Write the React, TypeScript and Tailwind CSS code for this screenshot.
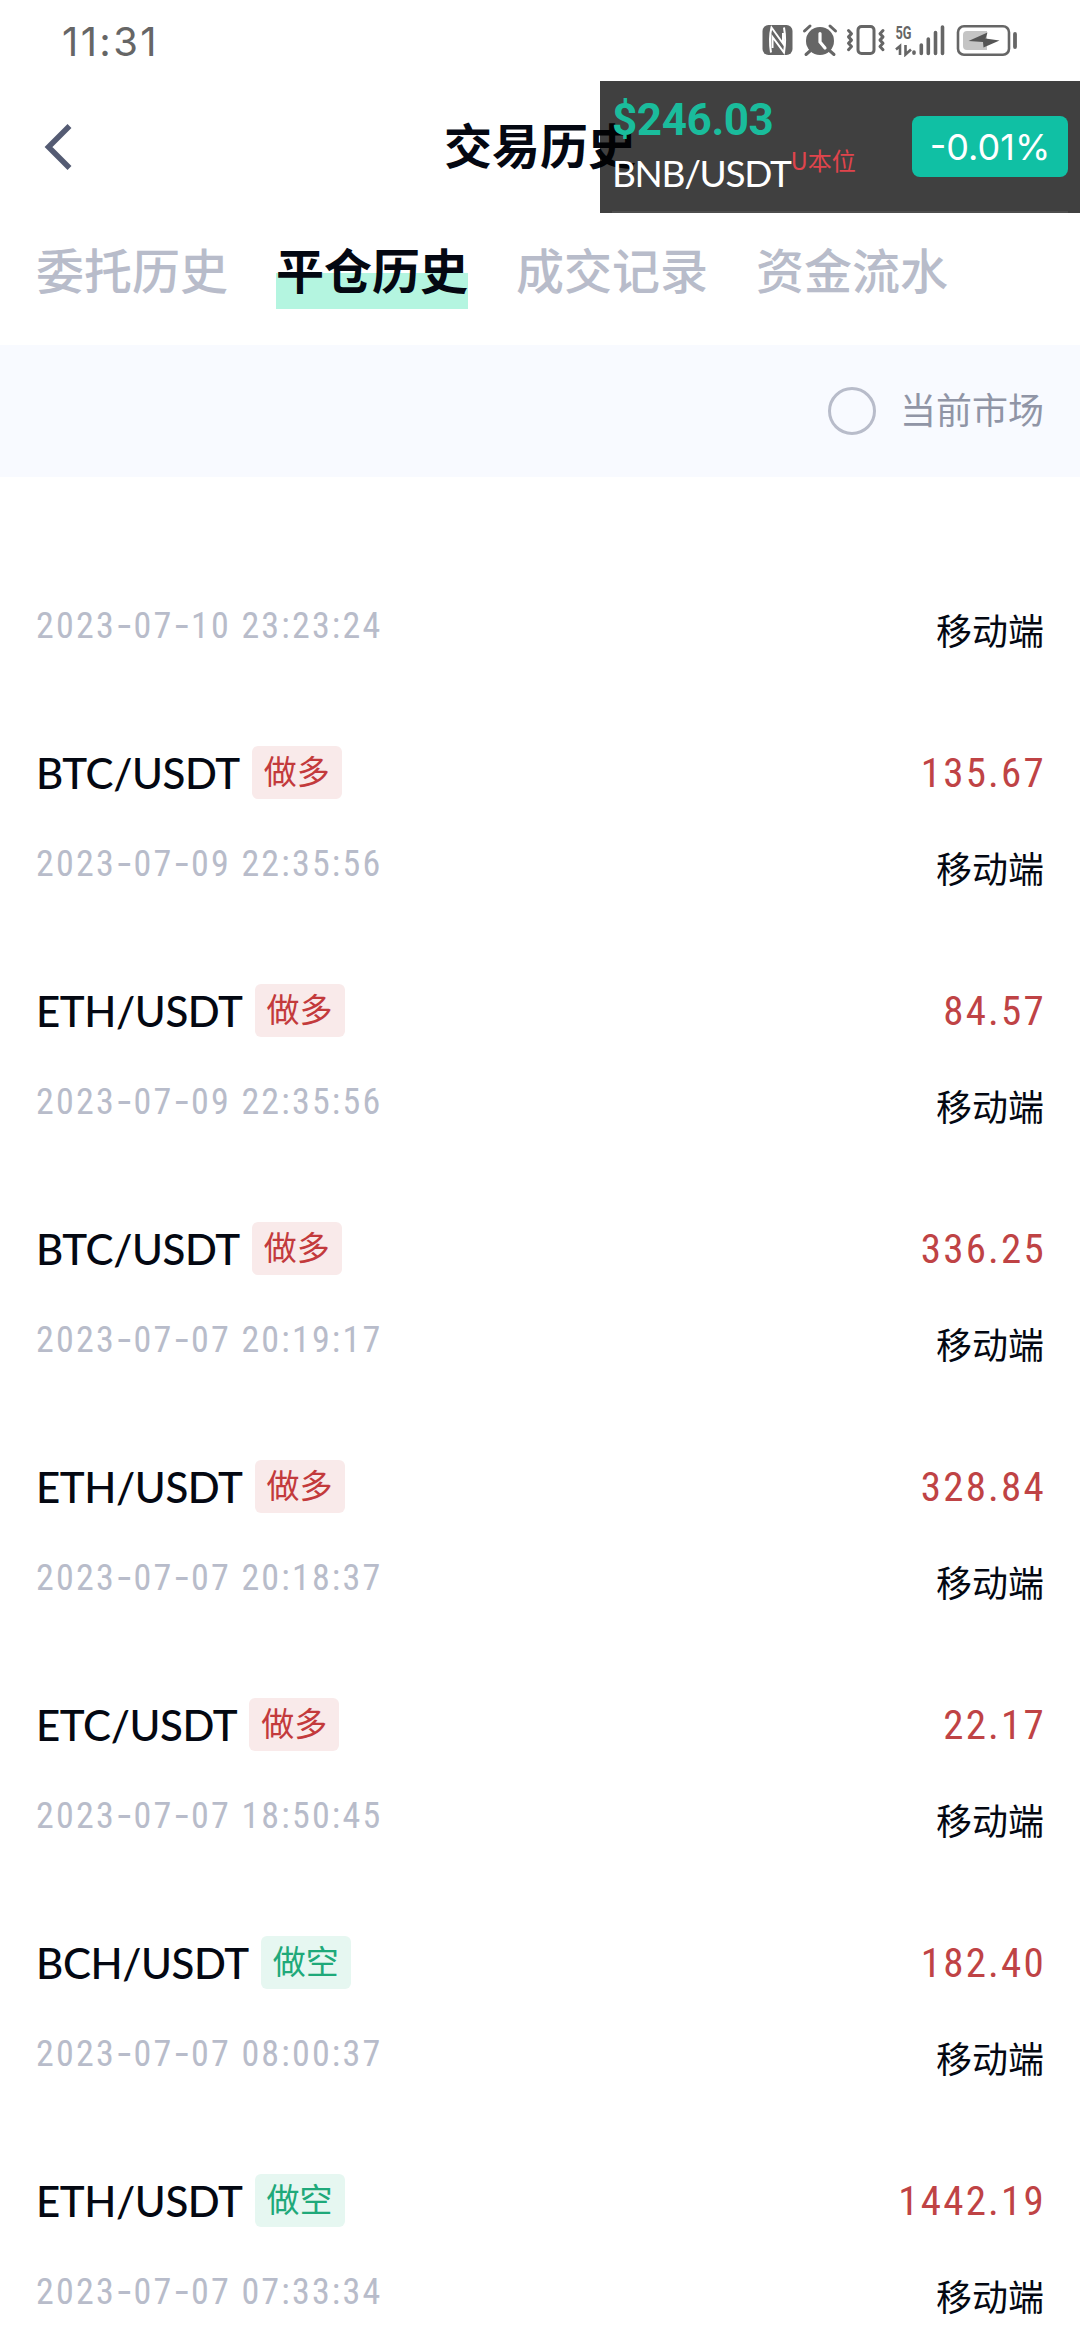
import { clsx } from "clsx"

type Side = "long" | "short"

interface CloseRecord {
  pair?: string
  side?: Side
  profit?: string
  date: string
  time: string
}

const tabs = ["委托历史", "平仓历史", "成交记录", "资金流水"]
const activeTab = "平仓历史"

const records: CloseRecord[] = [
  // scrolled so that only the lower line of this one shows
  { date: "2023-07-10", time: "23:23:24" },
  { pair: "BTC/USDT", side: "long", profit: "135.67", date: "2023-07-09", time: "22:35:56" },
  { pair: "ETH/USDT", side: "long", profit: "84.57", date: "2023-07-09", time: "22:35:56" },
  { pair: "BTC/USDT", side: "long", profit: "336.25", date: "2023-07-07", time: "20:19:17" },
  { pair: "ETH/USDT", side: "long", profit: "328.84", date: "2023-07-07", time: "20:18:37" },
  { pair: "ETC/USDT", side: "long", profit: "22.17", date: "2023-07-07", time: "18:50:45" },
  { pair: "BCH/USDT", side: "short", profit: "182.40", date: "2023-07-07", time: "08:00:37" },
  { pair: "ETH/USDT", side: "short", profit: "1442.19", date: "2023-07-07", time: "07:33:34" },
]

function StatusIcons() {
  return (
    <svg width="258" height="34" viewBox="0 0 258 34" fill="none" className="text-[#666666]">
      {/* nfc */}
      <rect x="2.5" y="2" width="30" height="30" rx="6" fill="currentColor" />
      <path d="M11 29.5C9.6 21 9.6 12 11.5 4.5L23 20.5V10" stroke="white" strokeWidth="2" />
      <path d="M24 4.5C25.5 13 25.5 21 24 29.5L12.5 14V25" stroke="white" strokeWidth="2" />
      {/* alarm */}
      <circle cx="60" cy="18" r="14" fill="currentColor" />
      <path d="M44.5 8L50 3M75.5 8L70 3M50 28l-4 3.5M70 28l4 3.5" stroke="currentColor" strokeWidth="3" strokeLinecap="round" />
      <path d="M60 10.5V19l5 6" stroke="white" strokeWidth="3.2" strokeLinecap="round" />
      {/* vibrate */}
      <rect x="98" y="3.5" width="16" height="27" rx="3.5" stroke="currentColor" strokeWidth="3" />
      <path d="M88.5 7.5l3 3.2-3 3.2 3 3.2-3 3.2 3 3.2-3 3.2" stroke="currentColor" strokeWidth="3" strokeLinecap="round" strokeLinejoin="round" />
      <path d="M123 7.5l-3 3.2 3 3.2-3 3.2 3 3.2-3 3.2 3 3.2" stroke="currentColor" strokeWidth="3" strokeLinecap="round" strokeLinejoin="round" />
      {/* network */}
      <text x="135.5" y="15.5" fontSize="18" fontWeight="700" fill="currentColor" textLength="16" lengthAdjust="spacingAndGlyphs" fontFamily="Roboto, sans-serif">
        5G
      </text>
      <path d="M136 26.5l4-3.5v9M145.500 22v9.500l5.500-5" stroke="currentColor" strokeWidth="2.6" />
      <path d="M154 29v1.2M161.300 22v8.500M168.300 16v14.500M175.500 9.500v21M182.500 4v26.500" stroke="currentColor" strokeWidth="3.6" strokeLinecap="round" />
      {/* battery */}
      <rect x="198" y="3.200" width="51" height="28.600" rx="6" stroke="currentColor" strokeWidth="2.6" />
      <path d="M203 12a4 4 0 0 1 4-4h20v19h-20a4 4 0 0 1-4-4z" fill="#c4c4c4" />
      <path d="M208.500 18L227.500 9.500L225.500 15.500L239.500 17.500L223.500 24.500L223 19z" fill="#555555" />
      <path d="M255 11v13" stroke="currentColor" strokeWidth="3.8" strokeLinecap="round" />
    </svg>
  )
}

function PriceOverlay() {
  return (
    <div className="absolute top-[81px] left-[600px] flex h-[132px] w-[480px] items-start justify-between bg-black/75 pr-3 pl-3">
      <div className="pt-[14px]">
        <div className="h-[50px] font-[Roboto,sans-serif] text-[44px] leading-[50px] font-bold tracking-[-0.4px] text-[#1abc9c]">
          $246.03
        </div>
        <div className="flex items-start">
          <span className="font-[Lato,sans-serif] text-[37px] leading-[55px] tracking-[-1.3px] text-white">BNB/USDT</span>
          <span className="pt-px text-[24px] leading-[28px] text-[#e0444c]">U本位</span>
        </div>
      </div>
      <div className="mt-[35px] flex h-[61px] w-[156px] items-center justify-center rounded-lg bg-[#10c0a4] pt-px font-[Inter,sans-serif] text-[36px] text-white">
        -0.01%
      </div>
      <div className="absolute bottom-0 left-3 h-[2px] w-[456px] bg-[#4d4d4d]" />
    </div>
  )
}

function SideTag({ side }: { side: Side }) {
  return (
    <span
      className={clsx(
        "flex h-[53px] w-[90px] items-center justify-center rounded-md pb-1 text-[33px] leading-none",
        side === "long" ? "bg-[#f9eaea] text-[#c33a3c]" : "bg-[#e6f7f1] text-[#1fa97a]"
      )}
    >
      {side === "long" ? "做多" : "做空"}
    </span>
  )
}

function RecordDate({ date, time }: { date: string; time: string }) {
  const parts = date.split("-")
  return (
    <span className="font-[Roboto,sans-serif] text-[36px] leading-[42px] tracking-[2.2px] whitespace-pre text-[#b8bcca] font-stretch-semi-condensed">
      {parts.map((part, i) => (
        <span key={i}>
          {i > 0 && <span className="font-[Inter,sans-serif] tracking-[1px]">-</span>}
          {part}
        </span>
      ))}
      {" " + time}
    </span>
  )
}

function RecordRow({ record }: { record: CloseRecord }) {
  return (
    <div className="h-[238px] shrink-0">
      <div className="flex h-[53px] items-center justify-between">
        {record.pair && record.side && (
          <>
            <div className="flex items-center gap-3">
              <span className="pt-[2px] font-[Lato,sans-serif] text-[42px] leading-[51px] font-medium tracking-[-0.4px] text-[#040812]">{record.pair}</span>
              <SideTag side={record.side} />
            </div>
            <span className="-mr-[2px] pt-[2px] font-[Roboto,sans-serif] text-[41px] leading-[51px] tracking-[2.2px] text-[#bf4345] font-stretch-semi-condensed">{record.profit}</span>
          </>
        )}
      </div>
      <div className="flex items-start justify-between pt-[43px]">
        <RecordDate date={record.date} time={record.time} />
        <span className="pt-[4px] text-[36px] leading-[42px] text-[#040812]">移动端</span>
      </div>
    </div>
  )
}

export default function App() {
  return (
    <div className="relative flex h-[2340px] w-[1080px] flex-col overflow-hidden bg-white font-['Noto_Sans_CJK_SC',sans-serif]">
      <div className="flex h-[81px] shrink-0 items-start justify-between pr-[62px] pl-[62px]">
        <span className="pt-[18px] font-[Inter,sans-serif] text-[40px] leading-[48px] tracking-[2.4px] text-[#666666]">11:31</span>
        <div className="pt-[23px]">
          <StatusIcons />
        </div>
      </div>

      <header className="grid h-[132px] shrink-0 grid-cols-3 items-center px-9">
        <svg width="44" height="52" viewBox="0 0 44 52" fill="none">
          <path d="M33.5 5L12.5 26L33.5 47" stroke="#545b73" strokeWidth="5.5" />
        </svg>
        <h1 className="pb-[9px] text-center text-[48px] leading-[56px] font-semibold text-[#040812]">交易历史</h1>
      </header>

      <nav className="flex h-[132px] shrink-0 items-start gap-12 px-9 pt-[24px]">
        {tabs.map((tab) => (
          <span
            key={tab}
            className={clsx(
              "h-[72px] text-[48px] leading-[62px]",
              tab === activeTab
                ? "bg-[linear-gradient(to_bottom,transparent_36px,#b4f5e0_36px)] font-semibold text-[#040812]"
                : "font-medium text-[#b8bcca]"
            )}
          >
            {tab}
          </span>
        ))}
      </nav>

      <div className="flex h-[132px] shrink-0 items-center justify-end gap-6 bg-[#f8faff] px-9">
        <span className="size-12 rounded-full border-[3px] border-[#b8bcca]" />
        <span className="pb-[6px] text-[36px] leading-[42px] text-[#9095a6]">当前市场</span>
      </div>

      <main className="flex flex-col px-9 pt-[31px]">
        {records.map((record, i) => (
          <RecordRow key={i} record={record} />
        ))}
      </main>

      <PriceOverlay />
    </div>
  )
}
